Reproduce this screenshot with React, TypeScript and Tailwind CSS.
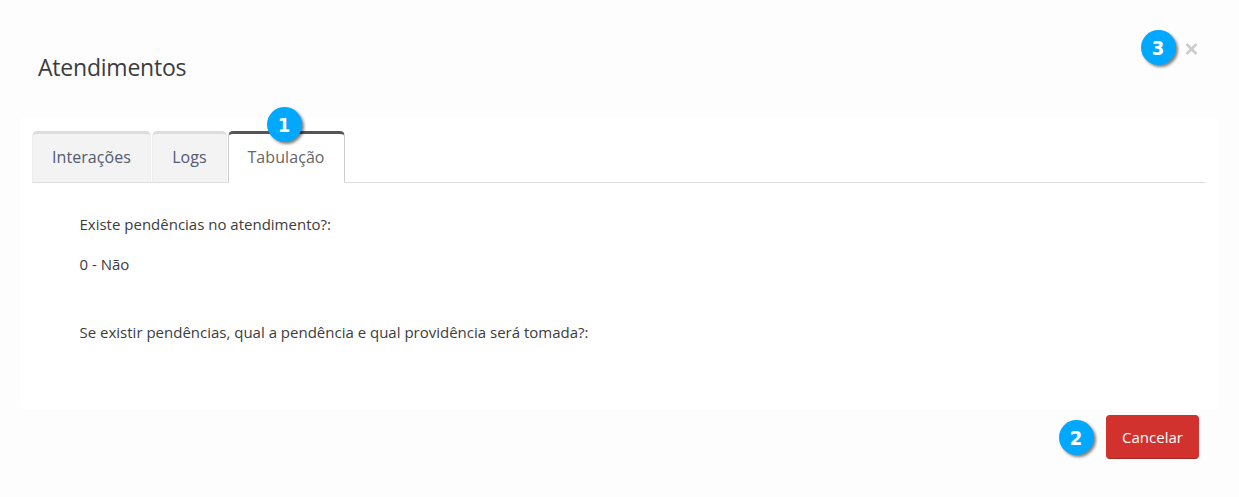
import React from 'react';
import clsx from 'clsx';

const tabs = [
  { label: 'Interações', width: 'w-[119px]', active: false },
  { label: 'Logs', width: 'w-[75px]', active: false },
  { label: 'Tabulação', width: 'w-[117px]', active: true },
];

function Marker({ value, className }: { value: number; className?: string }) {
  return (
    <span
      className={clsx(
        'flex size-[35px] items-center justify-center rounded-full bg-[#00a8ff] pr-px font-["DejaVu_Sans_Condensed","DejaVu_Sans",sans-serif] text-[20px] leading-none font-bold tracking-normal font-stretch-condensed text-white shadow-[2px_2px_3px_rgba(0,0,0,0.5)]',
        className,
      )}
    >
      {value}
    </span>
  );
}

export default function App() {
  return (
    <div className="flex h-[497px] w-full flex-col bg-[#fdfdfd] font-['Open_Sans',sans-serif] text-[#3c3c3c]">
      <header className="flex h-[118px] shrink-0 items-start justify-between pt-[30px] pr-[41px] pl-[38px]">
        <h1 className="mt-[21px] text-[23px] leading-[32px] tracking-[-0.22px]">Atendimentos</h1>
        <div className="flex items-center gap-[9px]">
          <Marker value={3} />
          <button aria-label="Fechar" className="mt-[2px] text-[#ccc]">
            <svg width="13" height="12" viewBox="0 0 13 12" stroke="currentColor" strokeWidth="2.5">
              <path d="M1.5 1l10 10M11.5 1L1.5 11" />
            </svg>
          </button>
        </div>
      </header>

      <section className="mx-5 flex h-[291px] shrink-0 flex-col rounded-[4px] bg-white pt-[13px] pr-[14px] pl-3">
        <nav className="flex h-[52px] shrink-0 gap-px border-b border-[#ddd]">
          {tabs.map((tab) => (
            <button
              key={tab.label}
              className={clsx(
                'relative h-[52px] rounded-t-[5px] border border-t-[3px] pb-[2px] text-[16px] tracking-[0.08px]',
                tab.width,
                tab.active
                  ? 'border-[#ccc] border-t-[#555] border-b-white bg-white pr-px text-[#666]'
                  : 'border-[#eee] border-t-[#ddd] border-b-[#ddd] bg-[#f3f3f3] text-[#505a70]',
              )}
            >
              {tab.label}
              {tab.active && <Marker value={1} className="absolute -top-[27px] left-[38px]" />}
            </button>
          ))}
        </nav>

        <main className="pt-[29px] pl-[47.5px] text-[15px] leading-[24px]">
          <p>Existe pendências no atendimento?:</p>
          <p className="mt-4">0 - Não</p>
          <p className="mt-[44px]">Se existir pendências, qual a pendência e qual providência será tomada?:</p>
        </main>
      </section>

      <footer className="flex items-start justify-end gap-3 pt-[6px] pr-10">
        <Marker value={2} className="mt-[5px]" />
        <button className="h-[44px] w-[93px] rounded-[4px] border border-[#d2322d] border-b-[#a82824] bg-[#d2322d] text-[15px] text-white">
          Cancelar
        </button>
      </footer>
    </div>
  );
}
